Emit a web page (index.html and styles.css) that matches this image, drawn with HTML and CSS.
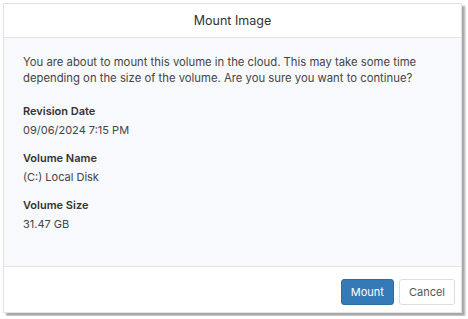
FILE: index.html
```html
<!DOCTYPE html>
<html lang="en">
<head>
  <meta charset="UTF-8" />
  <title>Mount Image</title>
  <link rel="stylesheet" href="styles.css">
</head>
<body>
  <div class="dialog">
    <div class="dialog-header">Mount Image</div>
    <div class="dialog-body">
      <p class="intro">You are about to mount this volume in the cloud. This may take some time depending on the size of the volume. Are you sure you want to continue?</p>
      <div class="field">
        <div class="field-label">Revision Date</div>
        <div class="field-value">09/06/2024 7:15 PM</div>
      </div>
      <div class="field">
        <div class="field-label">Volume Name</div>
        <div class="field-value">(C:) Local Disk</div>
      </div>
      <div class="field">
        <div class="field-label">Volume Size</div>
        <div class="field-value">31.47 GB</div>
      </div>
    </div>
    <div class="dialog-footer">
      <button class="btn btn-primary">Mount</button>
      <button class="btn btn-default">Cancel</button>
    </div>
  </div>
</body>
</html>
```

FILE: styles.css
```css
body {
  margin: 0;
  padding: 3px;
  background: #fff;
  font-family: Inter, "Noto Sans", sans-serif;
  color: #444;
}

.dialog {
  width: 459px;
  height: 310px;
  box-sizing: border-box;
  border: 1px solid #e2e2e2;
  background: #fff;
  box-shadow: 3px 3px 2px rgba(0, 0, 0, 0.35);
  display: flex;
  flex-direction: column;
}

.dialog-header {
  height: 33px;
  border-bottom: 1px solid #e5e5e5;
  display: flex;
  align-items: center;
  justify-content: center;
  font-size: 12.5px;
  color: #333;
}

.dialog-body {
  flex: 1;
  background: #f8f9fc;
  border-bottom: 1px solid #e5e5e5;
  padding: 16px 19px 0;
  font-size: 11px;
}

.intro {
  margin: 0 0 17px;
  font-size: 11.3px;
  line-height: 16px;
}

.field {
  margin-bottom: 12px;
}

.field-label {
  font-weight: 600;
  color: #333;
  line-height: 16px;
}

.field-value {
  margin-top: 3px;
  line-height: 16px;
}

.dialog-footer {
  height: 45px;
  display: flex;
  justify-content: flex-end;
  align-items: flex-start;
  gap: 5px;
  padding: 12px 6px 0 0;
  box-sizing: border-box;
}

.btn {
  font-family: inherit;
  font-size: 11px;
  height: 26px;
  padding: 0 9px;
  border-radius: 3px;
  cursor: pointer;
}

.btn-primary {
  background: #337ab7;
  border: 1px solid #2e6da4;
  color: #fff;
}

.btn-default {
  background: #fff;
  border: 1px solid #ddd;
  color: #555;
}
```
